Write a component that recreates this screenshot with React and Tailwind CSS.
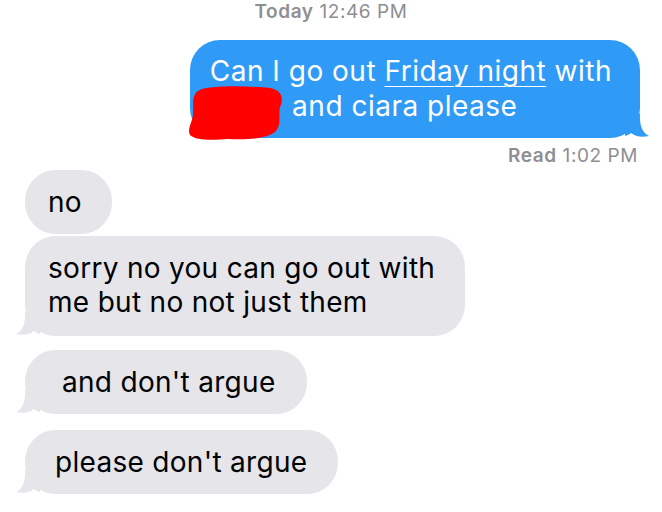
import React from 'react';

const Tail = ({ side, color }) => (
  <svg
    width="24"
    height="24"
    viewBox="0 0 24 24"
    className={`absolute bottom-0 ${side === 'right' ? '-right-[9px]' : '-left-[9px] -scale-x-100'}`}
  >
    <path d="M0 0 H15 V4 C15 13 18 19 24 22 C16 24 10 22 6 19 C4 21 0 22 0 22 Z" fill={color} />
  </svg>
);

const Received = ({ children, className = '', tail = true }) => (
  <div className={`relative self-start bg-[#e5e5ea] rounded-[31px] py-[15px] text-black ${className}`}>
    {children}
    {tail && <Tail side="left" color="#e5e5ea" />}
  </div>
);

export default function App() {
  return (
    <div
      className="w-[662px] h-[512px] bg-white overflow-hidden flex flex-col"
      style={{ fontFamily: 'Inter, "Liberation Sans", sans-serif' }}
    >
      {/* timestamp */}
      <div className="text-center text-[19px] leading-[22px] tracking-[0.03em] text-[#8e8e93] pt-[1px]">
        <span className="font-semibold">Today</span> 12:46 PM
      </div>

      {/* sent */}
      <div className="relative self-end mr-[22px] mt-[17px] bg-[#2f9bf6] text-white rounded-[30px] pl-[20px] pr-[28px] py-[14px] text-[28px] leading-[35px] tracking-[0.5px]">
        Can I go out <span className="underline decoration-1 underline-offset-[5px]">Friday night</span> with
        <br />
        <span className="inline-block w-[74px]"></span> and ciara please
        <Tail side="right" color="#2f9bf6" />
        <svg width="96" height="56" viewBox="0 0 96 56" className="absolute -left-[2px] top-[45px]">
          <path
            d="M14 4 C30 0 62 1 82 3 C94 5 96 14 92 22 C90 30 94 38 88 46 C80 54 58 55 40 54 C26 55 8 56 2 50 C-1 44 4 38 5 30 C6 20 2 8 14 4 Z"
            fill="#ff0000"
          />
        </svg>
      </div>

      <div className="self-end mr-[24px] mt-[7px] text-[19px] leading-[22px] tracking-[0.03em] text-[#8e8e93]">
        <span className="font-semibold">Read</span> 1:02 PM
      </div>

      {/* received */}
      <div className="flex flex-col ml-[25px] mt-[3px] text-[28px] leading-[34px] tracking-[0.3px]">
        <Received className="pl-[23px] pr-[30px]" tail={false}>no</Received>
        <Received className="mt-[2px] pl-[23px] pr-[30px] pb-[17px]">
          sorry no you can go out with
          <br />
          me but no not just them
        </Received>
        <Received className="mt-[14px] pl-[37px] pr-[31px]">and don't argue</Received>
        <Received className="mt-[16px] pl-[30px] pr-[31px]">please don't argue</Received>
      </div>
    </div>
  );
}
